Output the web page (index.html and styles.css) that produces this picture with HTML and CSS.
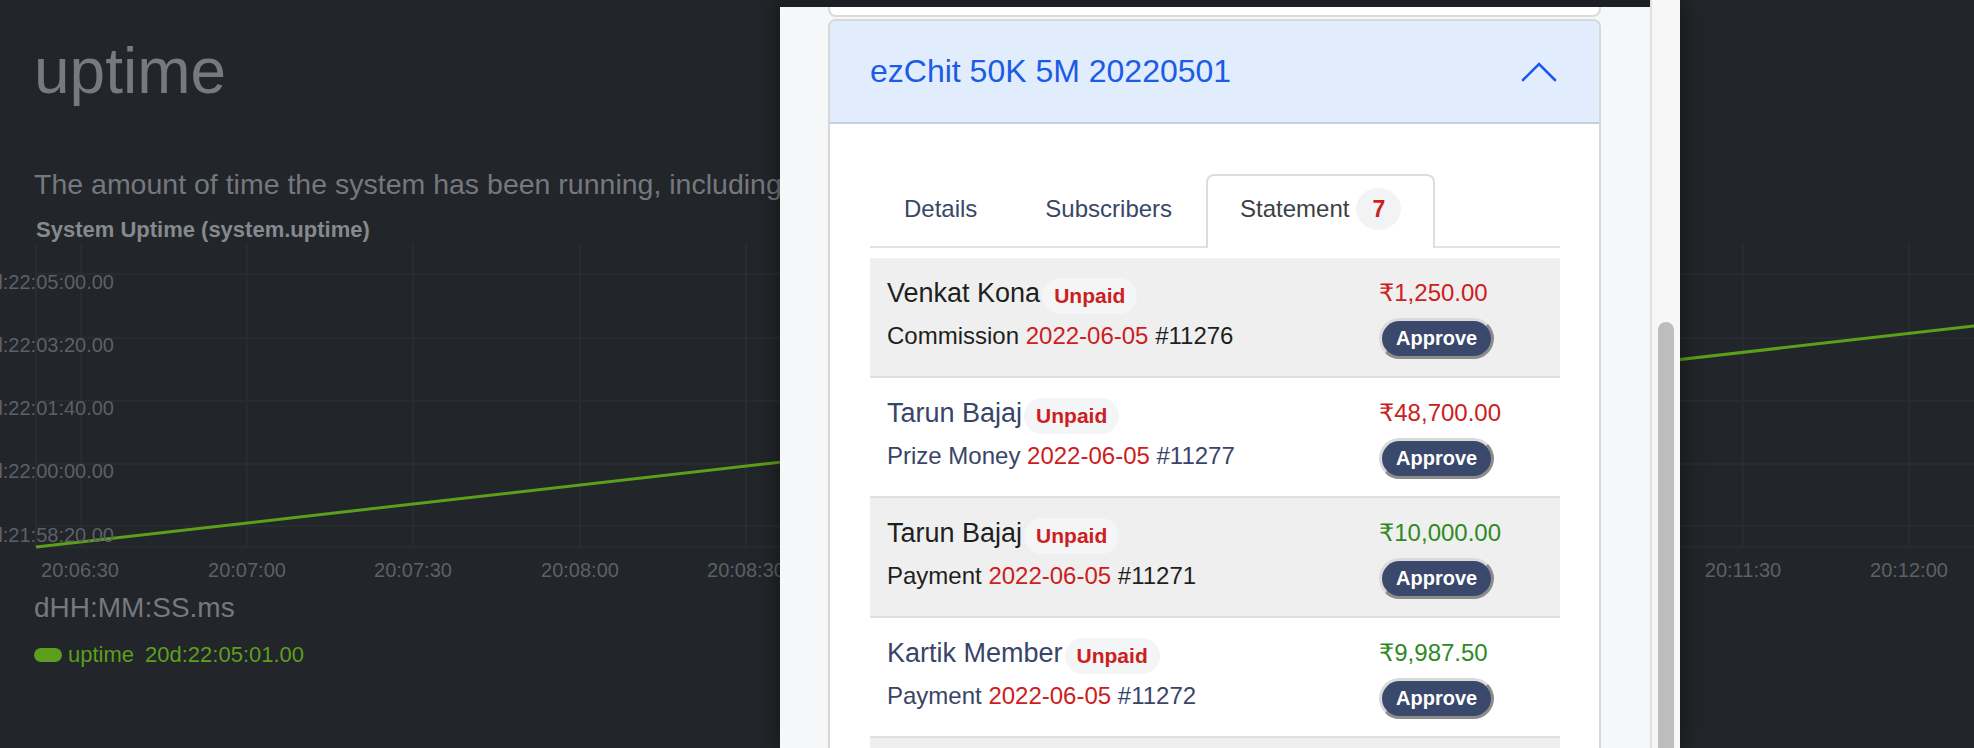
FILE: index.html
```html
<!DOCTYPE html>
<html lang="en">
<head>
<meta charset="utf-8">
<title>uptime</title>
<link rel="stylesheet" href="styles.css">
</head>
<body>
<main class="dash">
  <h1 class="metric-title">uptime</h1>
  <p class="metric-desc">The amount of time the system has been running, including time spent in suspend.</p>
  <div class="chart-title">System Uptime (system.uptime)</div>
  <svg class="chart" width="1974" height="350" viewBox="0 0 1974 350" aria-label="System uptime chart">
    <g class="grid">
      <line x1="36" y1="34" x2="1974" y2="34"/>
      <line x1="36" y1="98" x2="1974" y2="98"/>
      <line x1="36" y1="161" x2="1974" y2="161"/>
      <line x1="36" y1="224" x2="1974" y2="224"/>
      <line x1="36" y1="286" x2="1974" y2="286"/>
      <line x1="36" y1="307" x2="1974" y2="307"/>
      <line x1="36" y1="3" x2="36" y2="307"/>
      <line x1="81" y1="3" x2="81" y2="307"/>
      <line x1="247" y1="3" x2="247" y2="307"/>
      <line x1="413" y1="3" x2="413" y2="307"/>
      <line x1="580" y1="3" x2="580" y2="307"/>
      <line x1="746" y1="3" x2="746" y2="307"/>
      <line x1="912" y1="3" x2="912" y2="307"/>
      <line x1="1078" y1="3" x2="1078" y2="307"/>
      <line x1="1244" y1="3" x2="1244" y2="307"/>
      <line x1="1411" y1="3" x2="1411" y2="307"/>
      <line x1="1577" y1="3" x2="1577" y2="307"/>
      <line x1="1743" y1="3" x2="1743" y2="307"/>
      <line x1="1909" y1="3" x2="1909" y2="307"/>
    </g>
    <polyline class="series" points="36,307 1974,86"/>
    <g class="axis-label y-labels">
      <text x="114" y="49">20d:22:05:00.00</text>
      <text x="114" y="112">20d:22:03:20.00</text>
      <text x="114" y="175">20d:22:01:40.00</text>
      <text x="114" y="238">20d:22:00:00.00</text>
      <text x="114" y="302">20d:21:58:20.00</text>
    </g>
    <g class="axis-label x-labels">
      <text x="80" y="337">20:06:30</text>
      <text x="247" y="337">20:07:00</text>
      <text x="413" y="337">20:07:30</text>
      <text x="580" y="337">20:08:00</text>
      <text x="746" y="337">20:08:30</text>
      <text x="1743" y="337">20:11:30</text>
      <text x="1909" y="337">20:12:00</text>
    </g>
  </svg>
  <div class="units">dHH:MM:SS.ms</div>
  <div class="legend">
    <span class="swatch"></span>
    <span class="legend-name">uptime</span>
    <span class="legend-val">20d:22:05:01.00</span>
  </div>
</main>

<aside class="panel">
  <div class="panel-scroll">
    <div class="panel-top"></div>
    <div class="prev-card"></div>
    <section class="chit-card">
      <header class="chit-head">
        <h2 class="chit-title">ezChit 50K 5M 20220501</h2>
        <svg class="chevron" width="36" height="20" viewBox="0 0 36 20" aria-hidden="true">
          <polyline points="2,18 18,2 34,18"/>
        </svg>
      </header>
      <div class="chit-body">
        <nav class="tabs">
          <a class="tab">Details</a>
          <a class="tab">Subscribers</a>
          <a class="tab active">Statement<span class="count">7</span></a>
        </nav>
        <ul class="statement">
          <li class="row shade">
            <div class="row-main">
              <div class="name-line">Venkat Kona<span class="chip">Unpaid</span></div>
              <div class="sub">Commission <span class="date">2022-06-05</span> #11276</div>
            </div>
            <div class="row-side">
              <div class="amount due">₹1,250.00</div>
              <button class="approve">Approve</button>
            </div>
          </li>
          <li class="row plain">
            <div class="row-main">
              <div class="name-line">Tarun Bajaj<span class="chip">Unpaid</span></div>
              <div class="sub">Prize Money <span class="date">2022-06-05</span> #11277</div>
            </div>
            <div class="row-side">
              <div class="amount due">₹48,700.00</div>
              <button class="approve">Approve</button>
            </div>
          </li>
          <li class="row shade">
            <div class="row-main">
              <div class="name-line">Tarun Bajaj<span class="chip">Unpaid</span></div>
              <div class="sub">Payment <span class="date">2022-06-05</span> #11271</div>
            </div>
            <div class="row-side">
              <div class="amount paid">₹10,000.00</div>
              <button class="approve">Approve</button>
            </div>
          </li>
          <li class="row plain">
            <div class="row-main">
              <div class="name-line">Kartik Member<span class="chip">Unpaid</span></div>
              <div class="sub">Payment <span class="date">2022-06-05</span> #11272</div>
            </div>
            <div class="row-side">
              <div class="amount paid">₹9,987.50</div>
              <button class="approve">Approve</button>
            </div>
          </li>
          <li class="row shade"></li>
        </ul>
      </div>
    </section>
  </div>
  <div class="scrollbar"><div class="thumb"></div></div>
</aside>
</body>
</html>
```

FILE: styles.css
```css
* { box-sizing: border-box; }

html, body {
  margin: 0;
  width: 1974px;
  height: 748px;
  overflow: hidden;
}

body {
  position: relative;
  background: #222529;
  font-family: "Liberation Sans", Arial, "DejaVu Sans", sans-serif;
}

/* ---------- dashboard ---------- */
.dash {
  padding-top: 40px;
}

.metric-title {
  margin: 0;
  padding-left: 34px;
  font-size: 64px;
  line-height: 62px;
  font-weight: 400;
  color: #76797e;
}

.metric-desc {
  margin: 68px 0 0;
  padding-left: 34px;
  font-size: 28.5px;
  line-height: 28px;
  color: #75787d;
  white-space: nowrap;
}

.chart-title {
  margin-top: 22px;
  padding-left: 36px;
  font-size: 22px;
  line-height: 20px;
  font-weight: 700;
  color: #86898e;
}

.chart {
  display: block;
}

.grid line {
  stroke: #282c30;
  stroke-width: 2;
}

.series {
  fill: none;
  stroke: #5c9f1b;
  stroke-width: 3;
}

.axis-label text {
  font-family: "Liberation Sans", Arial, sans-serif;
  font-size: 20px;
  fill: #5d6065;
}

.y-labels text { text-anchor: end; }
.x-labels text { text-anchor: middle; }

.units {
  margin-top: 4px;
  padding-left: 34px;
  font-size: 28px;
  line-height: 28px;
  color: #76797e;
}

.legend {
  margin-top: 22px;
  padding-left: 34px;
  display: flex;
  align-items: center;
  gap: 6px;
  font-size: 22px;
  line-height: 22px;
  color: #5c9f1d;
}

.swatch {
  width: 28px;
  height: 14px;
  border-radius: 7px;
  background: #5c9f1d;
}

.legend-val { margin-left: 5px; }

/* ---------- overlay panel ---------- */
.panel {
  position: absolute;
  left: 780px;
  top: 0;
  width: 900px;
  height: 748px;
  display: flex;
  background: #f6f7f9;
  box-shadow: 0 0 22px rgba(0, 0, 0, 0.5);
  overflow: hidden;
}

.panel-scroll {
  flex: 1;
  min-width: 0;
}

.panel-top {
  height: 7px;
  background: #1d1f23;
}

.prev-card {
  height: 10px;
  margin: 0 49px 0 48px;
  background: #fff;
  border: 2px solid #dadada;
  border-top: 0;
  border-radius: 0 0 8px 8px;
}

.chit-card {
  margin: 2px 49px 0 48px;
  background: #fff;
  border: 2px solid #d7d7d7;
  border-bottom: 0;
  border-radius: 8px 8px 0 0;
  overflow: hidden;
}

.chit-head {
  height: 103px;
  display: flex;
  align-items: center;
  justify-content: space-between;
  padding: 0 42px 0 40px;
  background: #e1ecfd;
  border-bottom: 2px solid #c6d1df;
}

.chit-title {
  margin: 0;
  font-size: 32px;
  font-weight: 400;
  color: #1a5ce5;
}

.chevron polyline {
  fill: none;
  stroke: #1a5ce5;
  stroke-width: 2.6;
  stroke-linecap: round;
  stroke-linejoin: miter;
}

.chit-body {
  padding: 50px 39px 0 40px;
}

.tabs {
  display: flex;
  border-bottom: 2px solid #dfe3e8;
}

.tab {
  height: 74px;
  padding: 0 32px 6px;
  display: flex;
  align-items: center;
  font-size: 24px;
  color: #3a4668;
  border: 2px solid transparent;
  border-bottom: 0;
  border-radius: 8px 8px 0 0;
  margin-bottom: -2px;
  text-decoration: none;
}

.tab.active {
  background: #fff;
  border-color: #d9dee4;
  color: #3d4045;
}

.count {
  margin-left: 7px;
  width: 45px;
  height: 42px;
  border-radius: 50%;
  background: #f2f3f5;
  display: flex;
  align-items: center;
  justify-content: center;
  font-weight: 700;
  font-size: 23px;
  color: #cc1f1f;
}

.statement {
  list-style: none;
  margin: 10px 0 0;
  padding: 0;
}

.row {
  height: 120px;
  padding: 17px 17px 0;
  display: flex;
  justify-content: space-between;
  border-bottom: 2px solid #dde1e5;
  color: #1e1f21;
  background: #fff;
}

.row.shade { background: #efefef; }
.row.plain { color: #394568; }

.row-main { flex: 1; }

.name-line {
  height: 36px;
  display: flex;
  align-items: center;
  font-size: 27px;
}

.chip {
  margin: 6px 0 0 2px;
  height: 36px;
  padding: 0 12px;
  border-radius: 18px;
  background: #f4f5f7;
  display: flex;
  align-items: center;
  font-size: 21px;
  font-weight: 700;
  color: #cc2020;
}

.sub {
  margin-top: 10px;
  font-size: 24px;
  line-height: 30px;
}

.date { color: #cc2020; }

.row-side {
  width: 164px;
  display: flex;
  flex-direction: column;
  align-items: flex-start;
}

.amount {
  height: 36px;
  display: flex;
  align-items: center;
  font-size: 24px;
}

.amount.due { color: #cc2020; }
.amount.paid { color: #2e8a1f; }

.approve {
  margin-top: 7px;
  height: 41px;
  padding: 0 14px;
  border-radius: 21px;
  border: 3px solid;
  border-color: #dadada #8c8c8c #8c8c8c #dadada;
  background: #3a496b;
  color: #fff;
  font: 700 20px "Liberation Sans", Arial, sans-serif;
}

/* ---------- scrollbar ---------- */
.scrollbar {
  width: 30px;
  flex: none;
  border-left: 2px solid #dfdfdf;
  background: #f7f7f7;
  padding: 322px 0 0 6px;
}

.thumb {
  width: 16px;
  height: 500px;
  border-radius: 8px;
  background: #bdbdbd;
}
```
